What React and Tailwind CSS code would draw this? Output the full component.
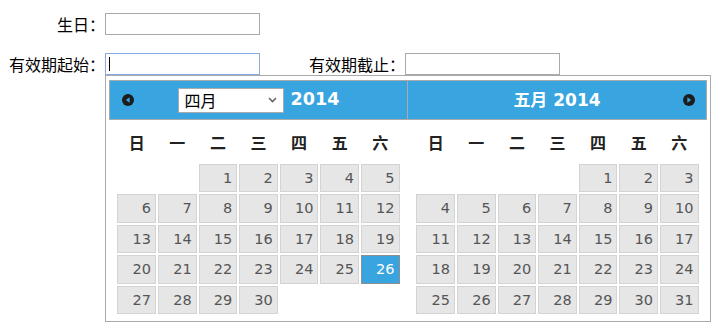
import React from "react";

const HEAD = ["日", "一", "二", "三", "四", "五", "六"];

function Arrow({ dir }) {
  return (
    <svg width="12" height="12" viewBox="0 0 12 12" className="block">
      <circle cx="6" cy="6" r="6" fill="#1c1c1c" />
      {dir === "left" ? (
        <polygon points="7.6,3.2 7.6,8.8 3.8,6" fill="#38a4e0" />
      ) : (
        <polygon points="4.4,3.2 4.4,8.8 8.2,6" fill="#38a4e0" />
      )}
    </svg>
  );
}

function Month({ blanks, count, selected }) {
  const cells = [...Array(blanks).fill(null), ...Array.from({ length: count }, (_, i) => i + 1)];
  while (cells.length % 7) cells.push(null);
  return (
    <div className="mx-auto w-[95%]">
      <div className="grid grid-cols-7 h-[43px] items-center">
        {HEAD.map((h) => (
          <div key={h} className="text-center font-bold text-[16px] leading-none text-[#222] font-['Noto_Sans_CJK_SC',sans-serif]">
            {h}
          </div>
        ))}
      </div>
      <div className="grid grid-cols-7 auto-rows-[30.4px]">
        {cells.map((d, i) => (
          <div key={i} className="p-[1px]">
            {d && (
              <div
                className={
                  "h-full flex items-center justify-end pr-[4px] border text-[14.5px] leading-none font-['DejaVu_Sans',sans-serif] " +
                  (d === selected
                    ? "bg-[#38a4e0] border-[#8e8e8e] text-white"
                    : "bg-[#e6e6e6] border-[#d3d3d3] text-[#555]")
                }
              >
                {d}
              </div>
            )}
          </div>
        ))}
      </div>
    </div>
  );
}

export default function App() {
  return (
    <div className="relative w-[724px] h-[336px] bg-white overflow-hidden text-black font-['Noto_Sans_CJK_SC',sans-serif]">
      <div className="flex flex-col gap-[18px] pt-[13px]">
        <div className="flex items-center h-[22px]">
          <div className="w-[105px] text-right text-[16px] leading-none">生日：</div>
          <div className="w-[155px] h-[22px] border border-[#a9a9a9] bg-white" />
        </div>
        <div className="flex items-center h-[22px]">
          <div className="w-[105px] text-right text-[16px] leading-none">有效期起始：</div>
          <div className="w-[155px] h-[22px] border border-[#86ace3] bg-white flex items-center pl-[3px]">
            <div className="w-[1px] h-[14px] bg-black" />
          </div>
          <div className="ml-[48px] w-[97px] text-right text-[16px] leading-none">有效期截止：</div>
          <div className="w-[155px] h-[22px] border border-[#a9a9a9] bg-white" />
        </div>
      </div>

      <div className="absolute left-[105px] top-[75px] w-[606px] h-[247px] border border-[#aaa] bg-white pt-[4px] px-[3px] flex">
        <div className="w-1/2">
          <div className="h-[40px] border border-[#aaa] bg-[#38a4e0] grid grid-cols-[36px_1fr_36px] items-center">
            <div className="pl-[12px]">
              <Arrow dir="left" />
            </div>
            <div className="flex items-center justify-center gap-[7px]">
              <div className="w-[106px] h-[25px] bg-white border border-[#aaa] flex items-center justify-between pl-[6px] pr-[6px]">
                <span className="text-[16px] leading-none text-black">四月</span>
                <svg width="9" height="6" viewBox="0 0 9 6">
                  <polyline points="1,1 4.5,4.5 8,1" fill="none" stroke="#666" strokeWidth="1.6" />
                </svg>
              </div>
              <span className="text-white font-bold text-[17.6px] leading-none font-['DejaVu_Sans',sans-serif]">2014</span>
            </div>
            <div />
          </div>
          <Month blanks={2} count={30} selected={26} />
        </div>
        <div className="w-1/2">
          <div className="h-[40px] border-y border-r border-[#aaa] bg-[#38a4e0] grid grid-cols-[36px_1fr_36px] items-center">
            <div />
            <div className="text-center text-white font-bold text-[17px] leading-none font-['DejaVu_Sans','Noto_Sans_CJK_SC',sans-serif]">
              五月 2014
            </div>
            <div className="flex justify-end pr-[11px]">
              <Arrow dir="right" />
            </div>
          </div>
          <Month blanks={4} count={31} selected={null} />
        </div>
      </div>
    </div>
  );
}
